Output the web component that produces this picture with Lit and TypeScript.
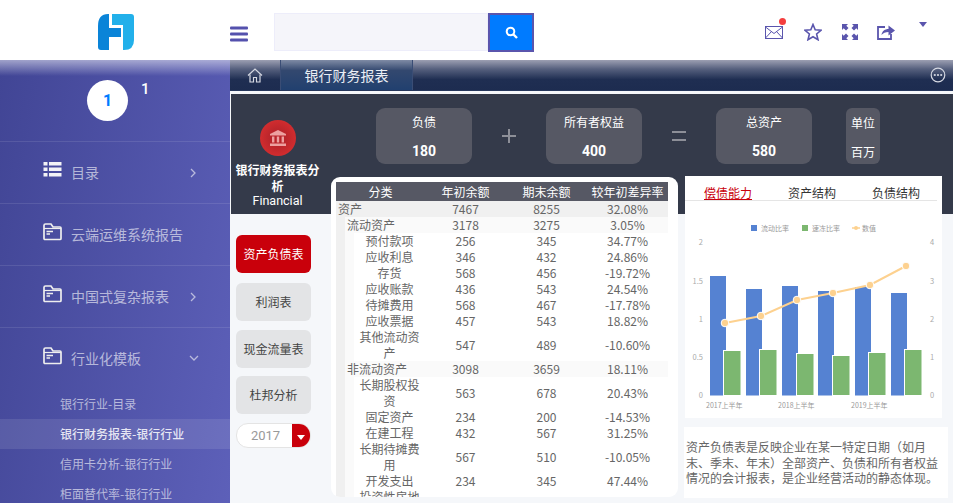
import { LitElement, html, css, svg } from "lit";
import { customElement } from "lit/decorators.js";

const folder = html`<svg class="ic" width="19" height="18" viewBox="0 0 19 18">
  <path d="M1 15.5V2.5Q1 1 2.500 1H8L10 4H17Q18 4 18 5V15.500Q18 16.500 17 16.500H2Q1 16.500 1 15.500Z" fill="none" stroke="#eee" stroke-width="1.700"/>
  <path d="M1 5.500H18" stroke="#eee" stroke-width="1.200"/>
  <path d="M3.500 8.500H10M3.500 11H7" stroke="#eee" stroke-width="1.300"/>
</svg>`;

const listIcon = html`<svg class="ic" width="19" height="15" viewBox="0 0 19 15" fill="#f2f2f6">
  <rect x="0.500" y="0" width="4" height="3.500"/><rect x="6" y="0" width="12.500" height="3.500"/>
  <rect x="0.500" y="5.500" width="4" height="3.500"/><rect x="6" y="5.500" width="12.500" height="3.500"/>
  <rect x="0.500" y="11" width="4" height="3.500"/><rect x="6" y="11" width="12.500" height="3.500"/>
</svg>`;

const chevRight = html`<svg class="chev" width="8" height="10" viewBox="0 0 8 10"><path d="M2 1L6 5L2 9" fill="none" stroke="#b9badd" stroke-width="1.300"/></svg>`;
const chevDown = html`<svg class="chev" width="10" height="8" viewBox="0 0 10 8"><path d="M1 2L5 6L9 2" fill="none" stroke="#b9badd" stroke-width="1.300"/></svg>`;

const menu = [
  { label: "目录", icon: listIcon, chev: chevRight },
  { label: "云端运维系统报告", icon: folder, chev: null },
  { label: "中国式复杂报表", icon: folder, chev: chevRight },
  { label: "行业化模板", icon: folder, chev: chevDown },
];
const subMenu = ["银行行业-目录", "银行财务报表-银行行业", "信用卡分析-银行行业", "柜面替代率-银行行业"];

// level: 0 top row, 1 group row, 2 leaf
const rows: [number, string, string, string, string][] = [
  [0, "资产", "7467", "8255", "32.08%"],
  [1, "流动资产", "3178", "3275", "3.05%"],
  [2, "预付款项", "256", "345", "34.77%"],
  [2, "应收利息", "346", "432", "24.86%"],
  [2, "存货", "568", "456", "-19.72%"],
  [2, "应收账款", "436", "543", "24.54%"],
  [2, "待摊费用", "568", "467", "-17.78%"],
  [2, "应收票据", "457", "543", "18.82%"],
  [2, "其他流动资产", "547", "489", "-10.60%"],
  [1, "非流动资产", "3098", "3659", "18.11%"],
  [2, "长期股权投资", "563", "678", "20.43%"],
  [2, "固定资产", "234", "200", "-14.53%"],
  [2, "在建工程", "432", "567", "31.25%"],
  [2, "长期待摊费用", "567", "510", "-10.05%"],
  [2, "开发支出", "234", "345", "47.44%"],
  [2, "投资性房地产", "", "", ""],
];

const blueBars = [[710, 276], [746, 289], [782, 286], [818, 291], [855, 287], [891, 293]];
const greenBars = [[724, 351], [760, 350], [797, 354], [833, 356], [869, 353], [905, 350]];
const linePts = [[725, 323], [761, 316], [797, 300], [833, 293], [870, 285], [906, 266]];
const leftTicks = [["2", 242], ["1.5", 281], ["1", 319], ["0.5", 357], ["0", 395]] as [string, number][];
const rightTicks = [["4", 242], ["3", 281], ["2", 319], ["1", 357], ["0", 395]] as [string, number][];

@customElement("app-root")
export class AppRoot extends LitElement {
  static styles = css`
    :host {
      display: block;
      width: 953px;
      height: 503px;
      overflow: hidden;
      font-family: "Noto Sans CJK SC", "Noto Sans", sans-serif;
      background: #f5f7fa;
    }
    .top {
      display: flex;
      align-items: center;
      height: 60px;
      background: #fff;
    }
    .logo {
      width: 230px;
      display: flex;
      justify-content: center;
      box-sizing: border-box;
      padding-top: 3px;
    }
    .logo svg {
      margin-left: 2px;
    }
    .burger {
      margin-right: 26px;
      margin-top: 7px;
    }
    .search {
      display: flex;
      height: 38px;
      margin-top: 4px;
    }
    .search-input {
      width: 212px;
      background: #f5f5fa;
      border: 1px solid #ededfa;
    }
    .search-btn {
      width: 46px;
      height: 39px;
      box-sizing: border-box;
      background: #007bff;
      border: 2px solid #5a55ad;
      display: flex;
      align-items: center;
      justify-content: center;
    }
    .tools {
      margin-left: auto;
      display: flex;
      align-items: center;
      gap: 20px;
      padding: 4px 26px 0 0;
      box-sizing: border-box;
      height: 60px;
    }
    .mail {
      position: relative;
      display: flex;
      margin-right: 1px;
    }
    .dot {
      position: absolute;
      right: -3px;
      top: -8px;
      width: 7px;
      height: 7px;
      border-radius: 50%;
      background: #f43e3e;
    }
    .share {
      margin-left: -1px;
    }
    .caret {
      align-self: flex-start;
      margin-top: 18px;
      margin-left: 4px;
      width: 0;
      height: 0;
      border-left: 4px solid transparent;
      border-right: 4px solid transparent;
      border-top: 5px solid #5a55ad;
    }
    .body {
      display: flex;
      height: 443px;
    }
    .side {
      width: 230px;
      flex: none;
      overflow: hidden;
      color: rgba(255, 255, 255, 0.6);
      background:
        linear-gradient(to bottom, rgba(255, 255, 255, 0.5), rgba(255, 255, 255, 0) 16px),
        linear-gradient(100deg, #414595 0%, #5d60b9 100%);
    }
    .user {
      height: 82px;
      box-sizing: border-box;
      padding: 20px 0 0 87px;
      display: flex;
      border-bottom: 1px solid rgba(255, 255, 255, 0.1);
    }
    .avatar {
      width: 41px;
      height: 41px;
      border-radius: 50%;
      background: #fff;
      color: #007bff;
      font: 700 16px/42px Roboto, sans-serif;
      text-align: center;
    }
    .user-name {
      color: #fff;
      font: 500 15px/16px Roboto, sans-serif;
      margin-left: 13px;
      margin-top: 1px;
    }
    .item {
      height: 62px;
      box-sizing: border-box;
      display: flex;
      align-items: center;
      padding: 0 0 2px 43px;
      border-bottom: 1px solid rgba(255, 255, 255, 0.1);
      font-size: 14px;
      position: relative;
    }
    .item.open {
      border-bottom: none;
      height: 61px;
    }
    .item .ic {
      margin-right: 9px;
      flex: none;
      position: relative;
      top: -2px;
    }
    .chev {
      position: absolute;
      left: 189px;
      top: 26px;
    }
    .sub {
      height: 30px;
      line-height: 30px;
      padding-left: 60px;
      font-size: 12px;
    }
    .sub.on {
      color: rgba(255, 255, 255, 0.85);
      font-weight: 500;
      background: rgba(255, 255, 255, 0.1);
    }
    .main {
      flex: 1;
      min-width: 0;
    }
    .tabbar {
      height: 31px;
      display: flex;
      background: linear-gradient(to bottom, #9c9fb2 0%, #56607e 30%, #1f2e52 65%, #1d2c50 100%);
      border-bottom: 1px solid #26375c;
      box-sizing: border-box;
      align-items: stretch;
    }
    .home {
      width: 50px;
      display: flex;
      align-items: center;
      justify-content: center;
    }
    .tab {
      width: 133px;
      box-sizing: border-box;
      border-left: 1px solid #3a4d75;
      border-right: 1px solid #3a4d75;
      background: linear-gradient(to bottom, #7f8ba5 0%, #33486f 35%, #21406f 100%);
      color: #eaeef5;
      font-size: 14px;
      line-height: 30px;
      text-align: center;
    }
    .more {
      margin-left: auto;
      margin-right: 7px;
      align-self: center;
      display: flex;
    }
    .dash {
      margin-top: 3px;
      margin-left: 1px;
    }
    .dark {
      height: 120px;
      background: #343a4a;
      display: flex;
      color: #fff;
    }
    .brand {
      width: 93px;
      flex: none;
      overflow: hidden;
      display: flex;
      flex-direction: column;
      align-items: center;
      text-align: center;
      padding: 26px 3px 0 3px;
      box-sizing: border-box;
      height: 120px;
    }
    .badge {
      width: 36px;
      height: 36px;
      flex: none;
      border-radius: 50%;
      background: radial-gradient(circle at 50% 50%, #b9252b 30%, #d42d2f 75%, #d9565a 100%);
      display: flex;
      align-items: center;
      justify-content: center;
      margin-bottom: 6px;
    }
    .brand-title {
      font-size: 12px;
      line-height: 16px;
      font-weight: 700;
    }
    .brand-en {
      font: 400 12.500px/18px Roboto, sans-serif;
      margin-top: -2px;
    }
    .kpis {
      display: flex;
      align-items: flex-start;
      padding: 14px 0 0 52px;
    }
    .kpi {
      width: 96px;
      height: 56px;
      border-radius: 9px;
      background: #565864;
      text-align: center;
      box-sizing: border-box;
      padding-top: 6px;
      font-size: 12px;
      line-height: 16px;
    }
    .kpi b {
      display: block;
      margin-top: 12px;
      font: 700 14px/18px Roboto, sans-serif;
    }
    .op {
      width: 74px;
      height: 56px;
      display: flex;
      align-items: center;
      justify-content: center;
    }
    .unit {
      width: 34px;
      height: 56px;
      margin-left: 34px;
      border-radius: 6px;
      background: #565864;
      text-align: center;
      font-size: 12px;
      line-height: 29px;
    }
    .content {
      display: flex;
      height: 321px;
      margin-top: -37px;
      position: relative;
    }
    .btns {
      width: 100px;
      flex: none;
      padding: 58px 0 0 5px;
      box-sizing: border-box;
      display: flex;
      flex-direction: column;
    }
    .btn {
      width: 75px;
      height: 38px;
      border-radius: 6px;
      background: #e3e4e6;
      color: #444;
      font-size: 12px;
      line-height: 38px;
      text-align: center;
      margin-bottom: 9px;
    }
    .btn:nth-child(1) {
      margin-bottom: 10px;
    }
    .btn:nth-child(3) {
      margin-bottom: 8px;
    }
    .btn.on {
      background: #c9000b;
      color: #fff;
    }
    .year {
      width: 75px;
      height: 25px;
      box-sizing: border-box;
      border: 1px solid #e4e4e4;
      border-radius: 12px;
      overflow: hidden;
      background: #fff;
      display: flex;
    }
    .year span {
      flex: 1;
      color: #999;
      font: 400 13px/24px Roboto, sans-serif;
      text-align: center;
      padding-left: 2px;
    }
    .year i {
      width: 18px;
      background: #c9000b;
      display: flex;
      align-items: center;
      justify-content: center;
    }
    .year i::after {
      content: "";
      border-left: 4px solid transparent;
      border-right: 4px solid transparent;
      border-top: 5px solid #fff;
      margin-top: 3px;
    }
    .card {
      width: 347px;
      height: 320px;
      flex: none;
      box-sizing: border-box;
      padding: 5px 0 0 5px;
      background: #fff;
      border-radius: 9px;
      overflow: hidden;
    }
    .row {
      display: grid;
      grid-template-columns: 89px 81px 81px 81px;
      width: 332px;
      font-size: 12px;
      line-height: 16px;
      color: #666;
      text-align: center;
      align-items: center;
    }
    .row.head {
      background: #565864;
      color: #fff;
      height: 19px;
      line-height: 19px;
    }
    .row.l0 {
      background: #f0f0f0;
    }
    .row.l1 {
      background: linear-gradient(to right, #f0f0f0 9px, #fafafa 9px);
    }
    .row.l2 {
      background: linear-gradient(to right, #f0f0f0 9px, #fafafa 9px 18px, #fff 18px);
    }
    .row.l0 .cat {
      text-align: left;
      padding-left: 2px;
    }
    .row.l1 .cat {
      text-align: left;
      padding-left: 11px;
      white-space: nowrap;
    }
    .row.l2 .cat {
      padding: 0 5px 0 23px;
    }
    .right {
      margin-left: 7px;
      flex: none;
      display: flex;
      flex-direction: column;
    }
    .chart {
      width: 257px;
      height: 243px;
      background: #fff;
      margin-top: -1px;
    }
    .chart-tabs {
      display: flex;
      height: 25px;
      width: 252px;
      box-sizing: border-box;
      border-bottom: 1px solid #e5e5e5;
      padding: 9px 0 0 19px;
      gap: 36px;
      font-size: 12px;
      line-height: 16px;
      color: #333;
    }
    .chart-tabs .on {
      color: #c9000b;
      text-decoration: underline;
    }
    .chart svg {
      display: block;
    }
    .chart text {
      font-family: "Noto Sans CJK SC", sans-serif;
    }
    .desc {
      width: 264px;
      height: 71px;
      margin: 9px 0 0 -1px;
      box-sizing: border-box;
      padding: 12px 0 0 2px;
      background: #fff;
      color: #666;
      font-size: 12px;
      line-height: 15.500px;
    }
  `;

  renderChart() {
    const ox = 685;
    const oy = 201;
    const base = 395.5;
    return html`<svg width="257" height="217" viewBox="${ox} ${oy} 257 217">
      <rect x="751" y="225" width="6" height="6" fill="#5582d2"></rect>
      <text x="761" y="231" font-size="7" fill="#999">流动比率</text>
      <rect x="802" y="225" width="6" height="6" fill="#7cb770"></rect>
      <text x="812" y="231" font-size="7" fill="#999">速冻比率</text>
      <line x1="852" y1="228" x2="860" y2="228" stroke="#fdd18f" stroke-width="1.500"></line>
      <circle cx="856" cy="228" r="2" fill="#fdd18f"></circle>
      <text x="862" y="231" font-size="7" fill="#999">数值</text>
      ${leftTicks.map(([t, y]) => svg`<text x="703" y=${y + 2.5} text-anchor="end" font-size="7.500" fill="#aaa">${t}</text>`)}
      ${rightTicks.map(([t, y]) => svg`<text x="930" y=${y + 2.5} font-size="7.500" fill="#aaa">${t}</text>`)}
      ${blueBars.map(([x, y]) => svg`<rect x=${x} y=${y} width="16" height=${base - y} fill="#5582d2"></rect>`)}
      ${greenBars.map(([x, y]) => svg`<rect x=${x - 0.5} y=${y - 0.5} width="17.500" height=${base - y + 0.5} fill="#7cb770" stroke="#fff" stroke-width="1"></rect>`)}
      <polyline points=${linePts.map((p) => p.join(",")).join(" ")} fill="none" stroke="#fdd18f" stroke-width="2"></polyline>
      ${linePts.map(([x, y]) => svg`<circle cx=${x} cy=${y} r="3.800" fill="#fdd18f" stroke="#fff" stroke-width="1"></circle>`)}
      <text x="706" y="408" font-size="7" fill="#999">2017上半年</text>
      <text x="778" y="408" font-size="7" fill="#999">2018上半年</text>
      <text x="851" y="408" font-size="7" fill="#999">2019上半年</text>
    </svg>`;
  }

  render() {
    return html`
      <div class="top">
        <div class="logo">
          <svg width="38" height="38" viewBox="0 0 38 38">
            <path d="M1 13Q1 1 11 1H12V15H24V24H12V37H4Q1 37 1 34Z" fill="#0a84d8"></path>
            <path d="M15 1H34Q37 1 37 4V27Q37 37 27 37H26V12H15Z" fill="#22b0ea"></path>
          </svg>
        </div>
        <svg class="burger" width="18" height="16" viewBox="0 0 18 16" fill="#5451ad">
          <rect width="18" height="3" y="0.500" rx="1"></rect>
          <rect width="18" height="3" y="6.500" rx="1"></rect>
          <rect width="18" height="3" y="12.500" rx="1"></rect>
        </svg>
        <div class="search">
          <div class="search-input"></div>
          <div class="search-btn">
            <svg width="13" height="13" viewBox="0 0 13 13"><circle cx="5.500" cy="5.500" r="3.800" fill="none" stroke="#fff" stroke-width="2"></circle><path d="M8.500 8.500L12 12" stroke="#fff" stroke-width="2.400"></path></svg>
          </div>
        </div>
        <div class="tools">
          <div class="mail">
            <svg width="18" height="13" viewBox="0 0 18 13" fill="none" stroke="#5a55ad" stroke-width="1"><rect x="0.500" y="0.500" width="17" height="12"></rect><path d="M0.500 1L9 7.500L17.500 1M0.500 12L6.500 5.500M17.500 12L11.500 5.500"></path></svg>
            <span class="dot"></span>
          </div>
          <svg width="18" height="18" viewBox="0 0 18 18"><path d="M9 1.500L11.200 6.800L17 7.300L12.600 11L14 16.700L9 13.700L4 16.700L5.400 11L1 7.300L6.800 6.800Z" fill="none" stroke="#5a55ad" stroke-width="1.600"></path></svg>
          <svg width="16" height="16" viewBox="0 0 16 16" fill="#5a55ad"><path d="M0 0H6L4.300 1.700L6.500 4L4 6.500L1.700 4.300L0 6ZM16 0V6L14.300 4.300L12 6.500L9.500 4L11.700 1.700L10 0ZM0 16V10L1.700 11.700L4 9.500L6.500 12L4.300 14.300L6 16ZM16 16H10L11.700 14.300L9.500 12L12 9.500L14.300 11.700L16 10Z"></path></svg>
          <svg class="share" width="18" height="16" viewBox="0 0 18 16"><path d="M8 3H1V15H14V10" fill="none" stroke="#5a55ad" stroke-width="1.800"></path><path d="M4.500 11C5 7 8 5 11.500 5V1.500L18 6.500L11.500 11.500V8C8.500 8 6 9 4.500 11Z" fill="#5a55ad"></path></svg>
          <span class="caret"></span>
        </div>
      </div>
      <div class="body">
        <nav class="side">
          <div class="user"><div class="avatar">1</div><div class="user-name">1</div></div>
          ${menu.map(
            (m) => html`<div class="item ${m.chev === chevDown ? "open" : ""}">${m.icon}<span>${m.label}</span>${m.chev}</div>`
          )}
          ${subMenu.map((s, i) => html`<div class="sub ${i === 1 ? "on" : ""}">${s}</div>`)}
        </nav>
        <div class="main">
          <div class="tabbar">
            <div class="home">
              <svg width="16" height="15" viewBox="0 0 16 15" fill="none" stroke="#d5d8e2" stroke-width="1.200"><path d="M1 7.500L8 1L15 7.500"></path><path d="M3 6.500V14H6.500V9.500H9.500V14H13V6.500"></path></svg>
            </div>
            <div class="tab">银行财务报表</div>
            <div class="more">
              <svg width="16" height="16" viewBox="0 0 16 16"><circle cx="8" cy="8" r="6.800" fill="none" stroke="#d5d8e2" stroke-width="1.200"></circle><circle cx="4.800" cy="8" r="1.100" fill="#d5d8e2"></circle><circle cx="8" cy="8" r="1.100" fill="#d5d8e2"></circle><circle cx="11.200" cy="8" r="1.100" fill="#d5d8e2"></circle></svg>
            </div>
          </div>
          <div class="dash">
            <div class="dark">
              <div class="brand">
                <div class="badge">
                  <svg width="18" height="18" viewBox="0 0 18 18" fill="#eda0a0"><path d="M9 1L17 5V6.500H1V5Z"></path><rect x="3" y="7.500" width="2.400" height="6"></rect><rect x="7.800" y="7.500" width="2.400" height="6"></rect><rect x="12.600" y="7.500" width="2.400" height="6"></rect><rect x="1" y="14.500" width="16" height="2.500"></rect></svg>
                </div>
                <div class="brand-title">银行财务报表分析</div>
                <div class="brand-en">Financial Statement</div>
              </div>
              <div class="kpis">
                <div class="kpi">负债<b>180</b></div>
                <div class="op"><svg width="14" height="14" viewBox="0 0 14 14"><path d="M7 0V14M0 7H14" stroke="#8d8f98" stroke-width="2"></path></svg></div>
                <div class="kpi">所有者权益<b>400</b></div>
                <div class="op"><svg width="14" height="12" viewBox="0 0 14 12"><path d="M0 2H14M0 10H14" stroke="#8d8f98" stroke-width="2"></path></svg></div>
                <div class="kpi">总资产<b>580</b></div>
                <div class="unit">单位<br />百万</div>
              </div>
            </div>
            <div class="content">
              <div class="btns">
                <div class="btn on">资产负债表</div>
                <div class="btn">利润表</div>
                <div class="btn">现金流量表</div>
                <div class="btn">杜邦分析</div>
                <div class="year"><span>2017</span><i></i></div>
              </div>
              <div class="card">
                <div class="row head"><div>分类</div><div>年初余额</div><div>期末余额</div><div>较年初差异率</div></div>
                ${rows.map(
                  (r) => html`<div class="row l${r[0]}"><div class="cat">${r[1]}</div><div>${r[2]}</div><div>${r[3]}</div><div>${r[4]}</div></div>`
                )}
              </div>
              <div class="right">
                <div class="chart">
                  <div class="chart-tabs"><span class="on">偿债能力</span><span>资产结构</span><span>负债结构</span></div>
                  ${this.renderChart()}
                </div>
                <div class="desc">资产负债表是反映企业在某一特定日期（如月末、季末、年末）全部资产、负债和所有者权益情况的会计报表，是企业经营活动的静态体现。</div>
              </div>
            </div>
          </div>
        </div>
      </div>
    `;
  }
}
